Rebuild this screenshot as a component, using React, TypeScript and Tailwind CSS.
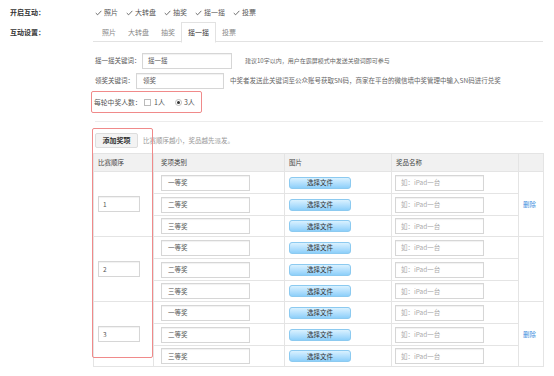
import React from 'react';

const groups = [
  { no: '1', del: true },
  { no: '2', del: false },
  { no: '3', del: true },
];
const prizes = ['一等奖', '二等奖', '三等奖'];
const rowH = ['h-[22px]', 'h-[22px]', 'h-[21px]'];

const Check = () => (
  <svg width="7" height="6" viewBox="0 0 8 7" className="shrink-0">
    <path d="M0.8 3.6 L3 5.6 L7.3 1" fill="none" stroke="#555" strokeWidth="1" />
  </svg>
);

const Box = ({ w, value, muted, pl }: { w: string; value: string; muted?: boolean; pl?: string }) => (
  <div
    className={`${w} h-[16px] flex items-center ${pl ?? 'pl-[5px]'} border border-[#d6d6d6] bg-white shadow-[inset_0_1px_1px_rgba(0,0,0,0.06)] text-[6.5px] ${
      muted ? 'text-[#aaa]' : 'text-[#555]'
    }`}
  >
    {value}
  </div>
);

const FileBtn = () => (
  <div className="w-[62px] h-[12px] flex items-center justify-center rounded-[3px] border border-[#8ccaf0] bg-gradient-to-b from-[#d9f1ff] to-[#8dcffa] text-[6.5px] text-[#333]">
    选择文件
  </div>
);

export default function App() {
  return (
    <div className="relative w-[554px] h-[376px] overflow-hidden bg-white text-[#444] font-['Noto_Sans_CJK_SC',sans-serif] text-[7px] leading-none">
      {/* 开启互动 */}
      <div className="flex items-center h-[11px] mt-[7px]">
        <div className="w-[95px] pl-[10px] font-bold text-[#333]">开启互动：</div>
        <div className="flex items-center gap-[8px] text-[#555]">
          {['照片', '大转盘', '抽奖', '摇一摇', '投票'].map((t) => (
            <div key={t} className="flex items-center gap-[2px]">
              <Check />
              <span>{t}</span>
            </div>
          ))}
        </div>
      </div>

      {/* 互动设置 tabs */}
      <div className="flex items-center mt-[4px]">
        <div className="w-[93px] pl-[10px] font-bold text-[#333]">互动设置：</div>
        <div className="w-[450px] flex pl-[3px] border-b border-[#e2e2e2] h-[20px]">
          {['照片', '大转盘', '抽奖', '摇一摇', '投票'].map((t) =>
            t === '摇一摇' ? (
              <div
                key={t}
                className="px-[6px] h-[21px] flex items-center border border-[#e2e2e2] border-b-white bg-white text-[#333]"
              >
                {t}
              </div>
            ) : (
              <div key={t} className="px-[6px] h-[20px] flex items-center text-[#888]">
                {t}
              </div>
            )
          )}
        </div>
      </div>

      {/* 关键词 */}
      <div className="ml-[91px] mt-[10px]">
        <div className="flex items-center h-[17px] pl-[4px]">
          <div className="w-[47px] text-[6.5px] text-[#555] whitespace-nowrap">摇一摇关键词：</div>
          <Box w="w-[90px]" value="摇一摇" pl="pl-[5px]" />
          <div className="ml-[13px] text-[6px] text-[#666] whitespace-nowrap">建议10字以内，用户在霸屏模式中发送关键词即可参与</div>
        </div>
        <div className="flex items-center h-[17px] pl-[4px] mt-[3px]">
          <div className="w-[41px] text-[6.5px] text-[#555] whitespace-nowrap">领奖关键词：</div>
          <Box w="w-[88px]" value="领奖" pl="pl-[6px]" />
          <div className="ml-[6px] text-[6.5px] text-[#666] whitespace-nowrap">
            中奖者发送此关键词至公众账号获取SN码，商家在平台的微信墙中奖管理中输入SN码进行兑奖
          </div>
        </div>
        <div className="mt-[2px] w-[111px] h-[22px] flex items-center pl-[2px] border border-[#f08a8a] rounded-[2px] text-[#555]">
          <span className="w-[50px] text-[6.8px] whitespace-nowrap">每轮中奖人数：</span>
          <span className="w-[7px] h-[7px] border border-[#bbb] bg-white" />
          <span className="ml-[3px]">1人</span>
          <span className="ml-[10px] w-[7px] h-[7px] rounded-full border border-[#bbb] flex items-center justify-center">
            <span className="w-[3px] h-[3px] rounded-full bg-[#333]" />
          </span>
          <span className="ml-[2px]">3人</span>
        </div>
      </div>

      <div className="ml-[95px] mt-[8px] w-[448px] h-px bg-[#ececec]" />

      {/* 奖项 */}
      <div className="ml-[93px] mt-[11px]">
        <div className="flex items-center h-[15px]">
          <div className="ml-[2px] w-[43px] h-[15px] flex items-center justify-center border border-[#ddd] rounded-[2px] bg-[#f3f3f3] text-[7px] font-bold text-[#333]">
            添加奖项
          </div>
          <span className="ml-[5px] text-[6.5px] text-[#999]">比赛顺序越小，奖品越先派发。</span>
        </div>

        <table className="mt-[5px] w-[450px] table-fixed border-collapse text-[6.5px]">
          <colgroup>
            <col className="w-[60px]" />
            <col className="w-[131px]" />
            <col className="w-[107px]" />
            <col className="w-[127px]" />
            <col className="w-[25px]" />
          </colgroup>
          <thead>
            <tr className="h-[18px] bg-[#f1f1f1] text-[#444]">
              <th className="p-0 border border-[#e4e4e4] text-left font-normal pl-[4px]">比赛顺序</th>
              <th className="p-0 border border-[#e4e4e4] text-left font-normal pl-[7px]">奖项类别</th>
              <th className="p-0 border border-[#e4e4e4] text-left font-normal pl-[4px]">图片</th>
              <th className="p-0 border border-[#e4e4e4] text-left font-normal pl-[4px]">奖品名称</th>
              <th className="p-0 border border-[#e4e4e4]" />
            </tr>
          </thead>
          <tbody>
            {groups.map((g) =>
              prizes.map((p, i) => (
                <tr key={g.no + p} className={rowH[i]}>
                  {i === 0 && (
                    <td rowSpan={3} className="p-0 border border-[#e4e4e4] pl-[4px] align-middle">
                      <Box w="w-[42px]" value={g.no} pl="pl-[4px]" />
                    </td>
                  )}
                  <td className="p-0 border border-[#e4e4e4] pl-[7px]">
                    <Box w="w-[89px]" value={p} pl="pl-[6px]" />
                  </td>
                  <td className="p-0 border border-[#e4e4e4] pl-[4px]">
                    <FileBtn />
                  </td>
                  <td className="p-0 border border-[#e4e4e4] pl-[3px]">
                    <Box w="w-[89px]" value="如：iPad一台" muted pl="pl-[5px]" />
                  </td>
                  {i === 0 && (
                    <td rowSpan={3} className="p-0 border border-[#e4e4e4] pl-[4px] text-[#3d8fe0]">
                      {g.del ? '删除' : ''}
                    </td>
                  )}
                </tr>
              ))
            )}
          </tbody>
        </table>
      </div>

      {/* 标注框 */}
      <div className="absolute left-[92px] top-[128px] w-[61px] h-[230px] border border-[#f08a8a] rounded-[2px] pointer-events-none" />
    </div>
  );
}
